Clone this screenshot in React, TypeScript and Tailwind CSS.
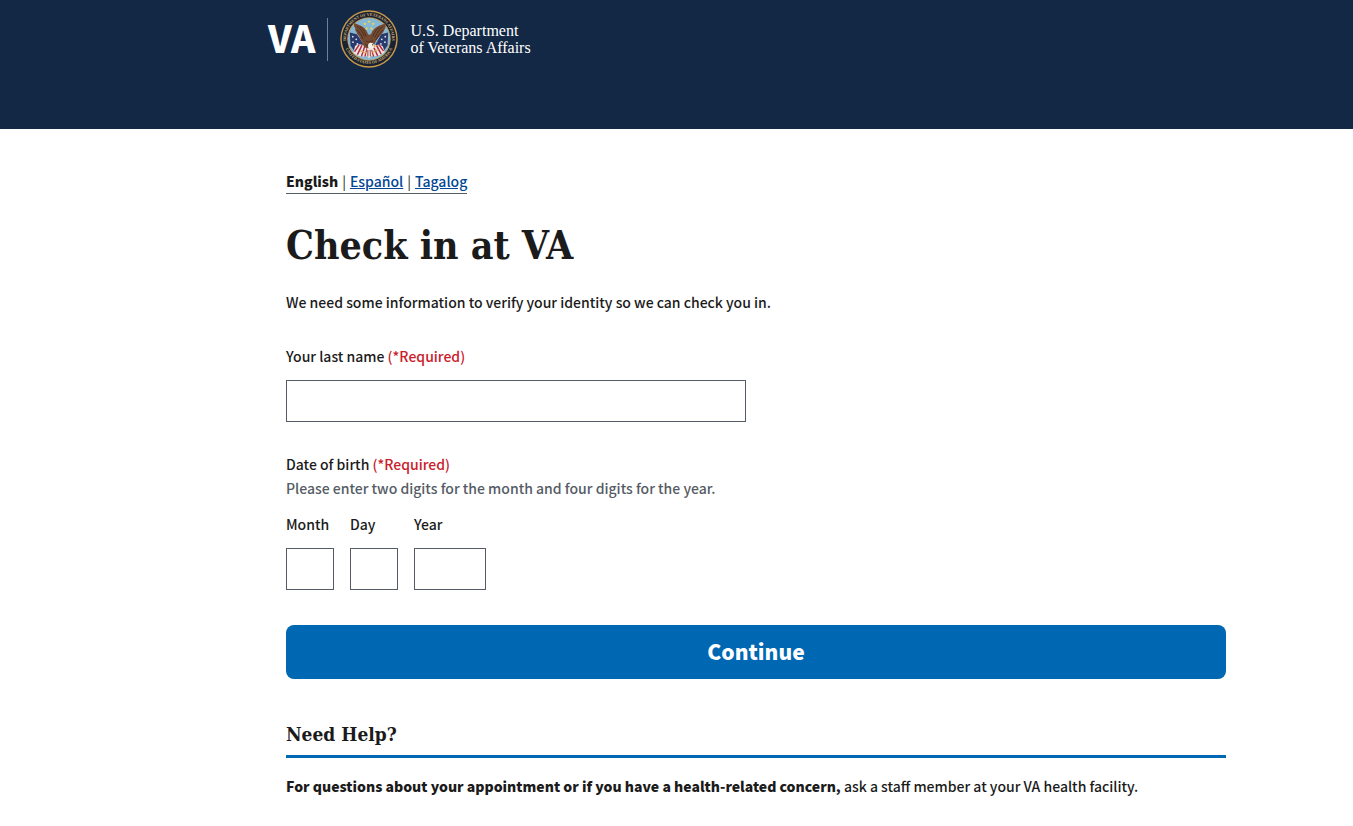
import React from "react";

const STARS: [number, number][] = [
  [100, 40], [86, 48], [114, 48], [91, 64], [109, 64],
];

function Star({ x, y }: { x: number; y: number }) {
  return (
    <path
      transform={`translate(${x} ${y})`}
      fill="#f2d64b"
      d="M0-6 1.6-2 6-2 2.5.8 3.8 5 0 2.4-3.8 5-2.5.8-6-2-1.6-2Z"
    />
  );
}

function Seal() {
  return (
    <svg viewBox="0 0 200 200" className="size-[58px] shrink-0" role="img" aria-label="Seal">
      <defs>
        <path id="ring-top" d="M25 124A79 79 0 1 1 175 124" />
        <path id="ring-bottom" d="M16 124A88 88 0 0 0 184 124" />
        <clipPath id="disc">
          <circle cx="100" cy="100" r="72" />
        </clipPath>
      </defs>
      <circle cx="100" cy="100" r="99" fill="#c79a4c" />
      <circle cx="100" cy="100" r="94" fill="#1a2232" />
      <circle cx="100" cy="100" r="75" fill="#c79a4c" />
      <circle cx="100" cy="100" r="72" fill="#86b8d4" />
      <g clipPath="url(#disc)">
        <path d="M34 78 58 84 84 122 72 136 48 140 36 122Z" fill="#2a3a6c" />
        <path d="M166 78 142 84 122 120 130 136 152 140 164 122Z" fill="#2a3a6c" />
        <g fill="#dfe6f2">
          <circle cx="44" cy="92" r="3" />
          <circle cx="56" cy="101" r="3" />
          <circle cx="45" cy="111" r="3" />
          <circle cx="60" cy="117" r="3" />
          <circle cx="156" cy="92" r="3" />
          <circle cx="144" cy="101" r="3" />
          <circle cx="155" cy="111" r="3" />
          <circle cx="141" cy="117" r="3" />
        </g>
        <path d="M52 124C64 116 76 120 96 124L98 158C82 164 64 160 46 148Z" fill="#f0e7e4" />
        <path d="M148 126C138 116 124 120 106 126L104 158C122 162 138 158 154 146Z" fill="#f0e7e4" />
        <g fill="none" stroke="#b3283a" strokeWidth="5">
          <path d="M66 120 50 144" />
          <path d="M76 121 60 154" />
          <path d="M86 123 74 160" />
          <path d="M94 132 86 160" />
          <path d="M134 119 150 142" />
          <path d="M126 122 142 152" />
          <path d="M117 130 130 158" />
          <path d="M108 138 116 160" />
        </g>
      </g>
      {STARS.map(([x, y]) => (
        <Star key={`${x}-${y}`} x={x} y={y} />
      ))}
      <path
        fill="#744a32"
        d="M97 84C93 74 88 64 78 58 70 53 66 52 62 50 57 49 53 47 49 45 47 52 49 59 53 64 51 69 55 74 58 78 57 82 62 87 66 90 66 97 71 103 76 108 76 116 80 124 88 130L98 134 112 128 122 112C125 105 129 101 132 96 138 91 140 87 143 83 149 78 151 73 153 68 158 61 159 53 156 45 149 51 139 52 130 57 120 62 113 69 108 81 104 86 100 87 97 84Z"
      />
      <g fill="none" stroke="#4b2c1e" strokeWidth="3">
        <path d="M58 55C70 64 78 74 84 91" />
        <path d="M58 68C66 75 74 85 80 100" />
        <path d="M69 57C78 64 87 76 90 91" />
        <path d="M149 56C138 63 128 76 121 94" />
        <path d="M148 69C139 77 132 88 124 104" />
        <path d="M136 58C127 65 118 76 113 92" />
        <path d="M88 106C98 112 106 110 114 103M86 118C91 122 96 124 100 121" />
      </g>
      <path d="M98 117C104 110 114 113 117 120 119 127 114 132 108 132L100 138C98 130 95 122 98 117Z" fill="#f4f0e8" />
      <path d="M115 119 124 125 117 130Z" fill="#e3b13c" />
      <circle cx="112" cy="120" r="2" fill="#2a2020" />
      <path d="M94 132 106 132 112 156 100 166 90 156Z" fill="#e7dfd4" />
      <path d="M96 138 96 160M104 138 105 160" stroke="#b3283a" strokeWidth="3" />
      <path d="M70 141 92 149M112 146 132 136" stroke="#d7b35a" strokeWidth="4" />
      <g fontFamily="Liberation Serif, serif" fontWeight="700" fontSize="14" fill="#d6b472" textAnchor="middle">
        <text>
          <textPath href="#ring-top" startOffset="50%">DEPARTMENT OF VETERANS AFFAIRS</textPath>
        </text>
        <text>
          <textPath href="#ring-bottom" startOffset="50%">UNITED STATES OF AMERICA</textPath>
        </text>
      </g>
    </svg>
  );
}

function Required() {
  return <span className="text-[#c9202c]">(*Required)</span>;
}

const inputClass =
  "block h-[42px] border border-[#565c65] bg-white px-2 text-[#1b1b1b] rounded-none";

function DatePart({ id, label, width, max }: { id: string; label: string; width: string; max: number }) {
  return (
    <div>
      <label htmlFor={id} className="block">{label}</label>
      <input id={id} name={id} inputMode="numeric" maxLength={max} className={`${inputClass} mt-3 ${width}`} />
    </div>
  );
}

export default function App() {
  return (
    <div className="min-h-screen bg-white font-['Noto_Sans_CJK_SC',sans-serif] text-[14px] leading-6 font-medium text-[#1b1b1b]">
      <header className="bg-[#132845] px-6 pt-[10px] pb-[61px] lg:pl-[268px]">
        <a href="#home" className="flex w-fit items-center gap-3 text-white">
          <span className="pb-1 text-[37px] leading-[54px] font-black">VA</span>
          <span className="h-[43px] w-px bg-[#71809a]" />
          <Seal />
          <span className="font-['Liberation_Serif',serif] text-[16px] leading-[17px] font-normal">
            U.S. Department
            <br />
            of Veterans Affairs
          </span>
        </a>
      </header>

      <main className="px-6 pt-10 pb-7 lg:pr-[127px] lg:pl-[286px]">
        <nav aria-label="Language" className="flex w-fit gap-1 border-b border-[#565c65]">
          <span className="font-black">English</span>
          <span className="font-normal">|</span>
          <a href="#es" lang="es" className="text-[#004795] underline">Español</a>
          <span className="font-normal">|</span>
          <a href="#tl" lang="tl" className="text-[#004795] underline">Tagalog</a>
        </nav>

        <h1 className="mt-6 font-['DejaVu_Serif_Condensed','DejaVu_Serif',serif] text-[39px] leading-[54px] font-bold">
          Check in at VA
        </h1>
        <p className="mt-[18px]">We need some information to verify your identity so we can check you in.</p>

        <form onSubmit={(e) => e.preventDefault()}>
          <label htmlFor="last-name" className="mt-[30px] block">
            Your last name <Required />
          </label>
          <input id="last-name" name="last-name" className={`${inputClass} mt-3 w-full max-w-[460px]`} />

          <fieldset className="mt-[30px]">
            <legend>
              Date of birth <Required />
            </legend>
            <p className="text-[#565c65]">Please enter two digits for the month and four digits for the year.</p>
            <div className="mt-3 flex gap-4">
              <DatePart id="month" label="Month" width="w-12" max={2} />
              <DatePart id="day" label="Day" width="w-12" max={2} />
              <DatePart id="year" label="Year" width="w-[72px]" max={4} />
            </div>
          </fieldset>

          <button
            type="submit"
            className="mt-[35px] block h-[54px] w-full rounded-lg bg-[#0067b2] pb-[2px] text-[21px] font-black text-white"
          >
            Continue
          </button>
        </form>

        <section>
          <h2 className="mt-[41px] border-b-[3px] border-[#0067b2] pb-[6px] font-['DejaVu_Serif_Condensed','DejaVu_Serif',serif] text-[19px] leading-[29px] font-bold">
            Need Help?
          </h2>
          <p className="mt-4">
            <strong className="font-black">
              For questions about your appointment or if you have a health-related concern,
            </strong>{" "}
            ask a staff member at your VA health facility.
          </p>
        </section>
      </main>
    </div>
  );
}
